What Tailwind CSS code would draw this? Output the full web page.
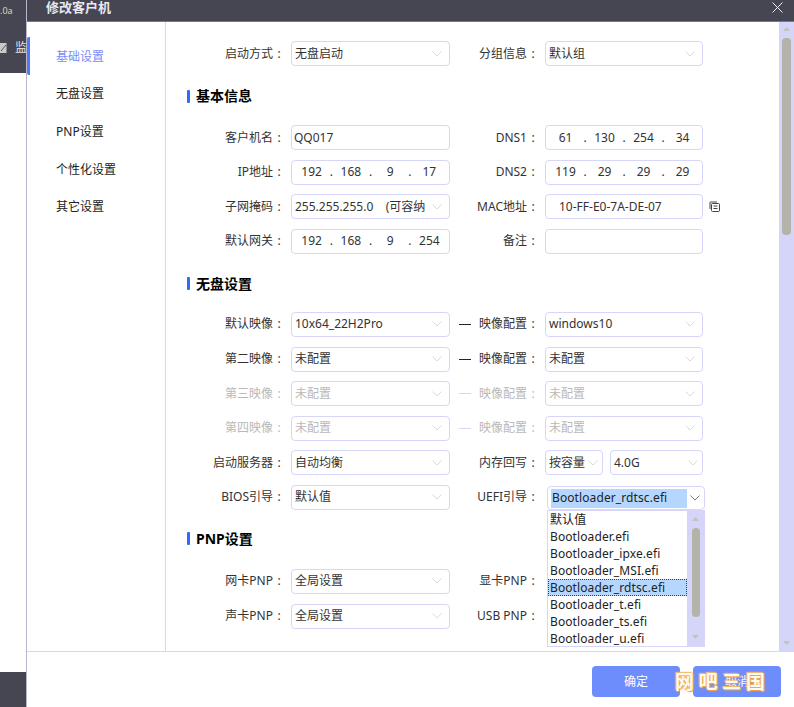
<!DOCTYPE html>
<html lang="zh">
<head>
<meta charset="utf-8">
<script src="https://cdn.jsdelivr.net/npm/@tailwindcss/browser@4"></script>
</head>
<body class="bg-white">
<div class="relative flex w-[794px] h-[707px] overflow-hidden bg-white text-[12px] leading-[16px] text-[#333] font-['Noto_Sans','Noto_Sans_CJK_SC',sans-serif]">

  <!-- page behind the dialog -->
  <div class="flex flex-col w-[27px] shrink-0 border-r border-[#b9b7c9] bg-white">
    <div class="h-[73px] bg-[#464653] overflow-hidden relative">
      <div class="absolute left-0 top-[3px] text-[9px] text-[#d9d9b8]">.0a</div>
      <svg class="absolute left-0 top-[42px]" width="7" height="13" viewBox="0 0 7 13"><path d="M0 1h6.500v10H0z" fill="#c9c9c9"/><path d="M1 9l5-6" stroke="#555" fill="none"/></svg>
      <div class="absolute left-[15px] top-[40px] text-[12px] text-[#e4e4e4] whitespace-nowrap w-[11px] overflow-hidden">监</div>
    </div>
    <div class="flex-1"></div>
    <div class="h-[35px] bg-[#464653]"></div>
  </div>

  <!-- dialog -->
  <div class="flex flex-col flex-1 min-w-0">
    <div class="flex items-center justify-between h-[22px] shrink-0 bg-[#464653] border-b border-[#77778a] pl-[19px] pr-[11px]">
      <div class="text-[13px] font-bold text-[#e8e8ee] -mt-[7px]">修改客户机</div>
      <svg class="-mt-[7px]" width="11" height="11" viewBox="0 0 11 11"><path d="M.5.5l10 10M10.5.5l-10 10" stroke="#f0f0f0" stroke-width="1" fill="none"/></svg>
    </div>

    <div class="flex h-[630px] shrink-0 border-b border-[#d6d6f5]">
      <!-- sidebar -->
      <div class="w-[139px] shrink-0 border-r border-[#d6d6f5] pt-[15px]">
        <div class="flex items-center h-[38px] pl-[26px] pt-[2px] border-l-[3px] border-[#4c78fb] rounded-l-[2px] text-[#7b8cf7]">基础设置</div>
        <div class="flex items-center h-[37px] pl-[29px] text-[#222]">无盘设置</div>
        <div class="flex items-center h-[38px] pl-[29px] pt-[2px] text-[#222]">PNP设置</div>
        <div class="flex items-center h-[37.5px] pl-[29px] pt-[2px] text-[#222]">个性化设置</div>
        <div class="flex items-center h-[37.5px] pl-[29px] pt-[2px] text-[#222]">其它设置</div>
      </div>

      <!-- form -->
      <div class="flex-1 min-w-0 pt-[19px] overflow-hidden">
        <div class="flex items-center h-[25px]">
          <div class="w-[119px] text-right">启动方式<span class="inline-block w-[12px] text-center">:</span></div>
          <div class="ml-[6px] w-[159px] h-[25px] flex items-center justify-between pl-[3px] pr-[7px] border border-[#d6d6fb] rounded-[4px]"><span>无盘启动</span><svg width="10" height="6" viewBox="0 0 10 6"><path d="M.5.5L5 5 9.500.5" stroke="#dcdccc" fill="none"/></svg></div>
          <div class="w-[89px] text-right">分组信息<span class="inline-block w-[12px] text-center">:</span></div>
          <div class="ml-[6px] w-[158px] h-[25px] flex items-center justify-between pl-[3px] pr-[7px] border border-[#d6d6fb] rounded-[4px]"><span>默认组</span><svg width="10" height="6" viewBox="0 0 10 6"><path d="M.5.5L5 5 9.500.5" stroke="#dcdccc" fill="none"/></svg></div>
        </div>

        <div class="flex items-center h-[14px] mt-[23px] mb-[22px] pl-[21px] gap-[6px] text-[14px] font-bold text-black">
          <span class="w-[3px] h-[13px] bg-[#2f6bf5] rounded-[1px]"></span><span>基本信息</span>
        </div>

        <div class="flex flex-col gap-[9.67px]">
          <div class="flex items-center h-[25px]">
            <div class="w-[119px] text-right">客户机名<span class="inline-block w-[12px] text-center">:</span></div>
            <div class="ml-[6px] w-[159px] h-[25px] flex items-center pl-[2px] border border-[#d6d6fb] rounded-[4px]">QQ017</div>
            <div class="w-[89px] text-right">DNS1<span class="inline-block w-[12px] text-center">:</span></div>
            <div class="ml-[6px] w-[158px] h-[25px] flex items-center border border-[#d6d6fb] rounded-[4px] text-center">
              <span class="flex-1">61</span><span class="w-0 flex justify-center">.</span><span class="flex-1">130</span><span class="w-0 flex justify-center">.</span><span class="flex-1">254</span><span class="w-0 flex justify-center">.</span><span class="flex-1">34</span>
            </div>
          </div>
          <div class="flex items-center h-[25px]">
            <div class="w-[119px] text-right">IP地址<span class="inline-block w-[12px] text-center">:</span></div>
            <div class="ml-[6px] w-[159px] h-[25px] flex items-center border border-[#d6d6fb] rounded-[4px] text-center">
              <span class="flex-1">192</span><span class="w-0 flex justify-center">.</span><span class="flex-1">168</span><span class="w-0 flex justify-center">.</span><span class="flex-1">9</span><span class="w-0 flex justify-center">.</span><span class="flex-1">17</span>
            </div>
            <div class="w-[89px] text-right">DNS2<span class="inline-block w-[12px] text-center">:</span></div>
            <div class="ml-[6px] w-[158px] h-[25px] flex items-center border border-[#d6d6fb] rounded-[4px] text-center">
              <span class="flex-1">119</span><span class="w-0 flex justify-center">.</span><span class="flex-1">29</span><span class="w-0 flex justify-center">.</span><span class="flex-1">29</span><span class="w-0 flex justify-center">.</span><span class="flex-1">29</span>
            </div>
          </div>
          <div class="flex items-center h-[25px]">
            <div class="w-[119px] text-right">子网掩码<span class="inline-block w-[12px] text-center">:</span></div>
            <div class="ml-[6px] w-[159px] h-[25px] flex items-center justify-between pl-[3px] pr-[7px] border border-[#d6d6fb] rounded-[4px]"><span class="whitespace-pre">255.255.255.0    (可容纳</span><svg class="shrink-0" width="10" height="6" viewBox="0 0 10 6"><path d="M.5.5L5 5 9.500.5" stroke="#dcdccc" fill="none"/></svg></div>
            <div class="w-[89px] text-right">MAC地址<span class="inline-block w-[12px] text-center">:</span></div>
            <div class="ml-[6px] w-[158px] h-[25px] flex items-center pl-[13px] border border-[#d6d6fb] rounded-[4px]">10-FF-E0-7A-DE-07</div>
            <svg class="ml-[6px]" width="11" height="11" viewBox="0 0 11 11"><rect x="2.500" y="2.500" width="8" height="8" rx="1" stroke="#444" fill="none"/><path d="M1 8V1.500Q1 1 1.500 1H8M4.500 5h4M4.500 7.500h4" stroke="#444" fill="none"/></svg>
          </div>
          <div class="flex items-center h-[25px]">
            <div class="w-[119px] text-right">默认网关<span class="inline-block w-[12px] text-center">:</span></div>
            <div class="ml-[6px] w-[159px] h-[25px] flex items-center border border-[#d6d6fb] rounded-[4px] text-center">
              <span class="flex-1">192</span><span class="w-0 flex justify-center">.</span><span class="flex-1">168</span><span class="w-0 flex justify-center">.</span><span class="flex-1">9</span><span class="w-0 flex justify-center">.</span><span class="flex-1">254</span>
            </div>
            <div class="w-[89px] text-right">备注<span class="inline-block w-[12px] text-center">:</span></div>
            <div class="ml-[6px] w-[158px] h-[25px] border border-[#d6d6fb] rounded-[4px]"></div>
          </div>
        </div>

        <div class="flex items-center h-[14px] mt-[23px] mb-[21px] pl-[21px] gap-[6px] text-[14px] font-bold text-black">
          <span class="w-[3px] h-[13px] bg-[#2f6bf5] rounded-[1px]"></span><span>无盘设置</span>
        </div>

        <div class="flex flex-col gap-[9.6px]">
          <div class="flex items-center h-[25px]">
            <div class="w-[119px] text-right">默认映像<span class="inline-block w-[12px] text-center">:</span></div>
            <div class="ml-[6px] w-[159px] h-[25px] flex items-center justify-between pl-[3px] pr-[7px] border border-[#d6d6fb] rounded-[4px]"><span>10x64_22H2Pro</span><svg width="10" height="6" viewBox="0 0 10 6"><path d="M.5.5L5 5 9.500.5" stroke="#dcdccc" fill="none"/></svg></div>
            <div class="w-[89px] flex items-center justify-between pl-[9px]"><span class="w-[12px] h-px bg-[#222]"></span><span>映像配置<span class="inline-block w-[12px] text-center">:</span></span></div>
            <div class="ml-[6px] w-[158px] h-[25px] flex items-center justify-between pl-[3px] pr-[7px] border border-[#d6d6fb] rounded-[4px]"><span>windows10</span><svg width="10" height="6" viewBox="0 0 10 6"><path d="M.5.5L5 5 9.500.5" stroke="#dcdccc" fill="none"/></svg></div>
          </div>
          <div class="flex items-center h-[25px]">
            <div class="w-[119px] text-right">第二映像<span class="inline-block w-[12px] text-center">:</span></div>
            <div class="ml-[6px] w-[159px] h-[25px] flex items-center justify-between pl-[3px] pr-[7px] border border-[#d6d6fb] rounded-[4px]"><span>未配置</span><svg width="10" height="6" viewBox="0 0 10 6"><path d="M.5.5L5 5 9.500.5" stroke="#dcdccc" fill="none"/></svg></div>
            <div class="w-[89px] flex items-center justify-between pl-[9px]"><span class="w-[12px] h-px bg-[#222]"></span><span>映像配置<span class="inline-block w-[12px] text-center">:</span></span></div>
            <div class="ml-[6px] w-[158px] h-[25px] flex items-center justify-between pl-[3px] pr-[7px] border border-[#d6d6fb] rounded-[4px]"><span>未配置</span><svg width="10" height="6" viewBox="0 0 10 6"><path d="M.5.5L5 5 9.500.5" stroke="#dcdccc" fill="none"/></svg></div>
          </div>
          <div class="flex items-center h-[25px] text-[#b9b9b9]">
            <div class="w-[119px] text-right">第三映像<span class="inline-block w-[12px] text-center">:</span></div>
            <div class="ml-[6px] w-[159px] h-[25px] flex items-center justify-between pl-[3px] pr-[7px] border border-[#d6d6fb] rounded-[4px]"><span>未配置</span><svg width="10" height="6" viewBox="0 0 10 6"><path d="M.5.5L5 5 9.500.5" stroke="#dcdccc" fill="none"/></svg></div>
            <div class="w-[89px] flex items-center justify-between pl-[9px]"><span class="w-[12px] h-px bg-[#d6d6fb]"></span><span>映像配置<span class="inline-block w-[12px] text-center">:</span></span></div>
            <div class="ml-[6px] w-[158px] h-[25px] flex items-center justify-between pl-[3px] pr-[7px] border border-[#d6d6fb] rounded-[4px]"><span>未配置</span><svg width="10" height="6" viewBox="0 0 10 6"><path d="M.5.5L5 5 9.500.5" stroke="#dcdccc" fill="none"/></svg></div>
          </div>
          <div class="flex items-center h-[25px] text-[#b9b9b9]">
            <div class="w-[119px] text-right">第四映像<span class="inline-block w-[12px] text-center">:</span></div>
            <div class="ml-[6px] w-[159px] h-[25px] flex items-center justify-between pl-[3px] pr-[7px] border border-[#d6d6fb] rounded-[4px]"><span>未配置</span><svg width="10" height="6" viewBox="0 0 10 6"><path d="M.5.5L5 5 9.500.5" stroke="#dcdccc" fill="none"/></svg></div>
            <div class="w-[89px] flex items-center justify-between pl-[9px]"><span class="w-[12px] h-px bg-[#d6d6fb]"></span><span>映像配置<span class="inline-block w-[12px] text-center">:</span></span></div>
            <div class="ml-[6px] w-[158px] h-[25px] flex items-center justify-between pl-[3px] pr-[7px] border border-[#d6d6fb] rounded-[4px]"><span>未配置</span><svg width="10" height="6" viewBox="0 0 10 6"><path d="M.5.5L5 5 9.500.5" stroke="#dcdccc" fill="none"/></svg></div>
          </div>
          <div class="flex items-center h-[25px]">
            <div class="w-[119px] text-right">启动服务器<span class="inline-block w-[12px] text-center">:</span></div>
            <div class="ml-[6px] w-[159px] h-[25px] flex items-center justify-between pl-[3px] pr-[7px] border border-[#d6d6fb] rounded-[4px]"><span>自动均衡</span><svg width="10" height="6" viewBox="0 0 10 6"><path d="M.5.5L5 5 9.500.5" stroke="#dcdccc" fill="none"/></svg></div>
            <div class="w-[89px] text-right">内存回写<span class="inline-block w-[12px] text-center">:</span></div>
            <div class="ml-[6px] w-[58px] h-[25px] flex items-center justify-between pl-[3px] pr-[4px] border border-[#d6d6fb] rounded-[4px]"><span>按容量</span><svg width="10" height="6" viewBox="0 0 10 6"><path d="M.5.5L5 5 9.500.5" stroke="#dcdccc" fill="none"/></svg></div>
            <div class="ml-[7px] w-[93px] h-[25px] flex items-center justify-between pl-[3px] pr-[4px] border border-[#d6d6fb] rounded-[4px]"><span>4.0G</span><svg width="10" height="6" viewBox="0 0 10 6"><path d="M.5.5L5 5 9.500.5" stroke="#dcdccc" fill="none"/></svg></div>
          </div>
          <div class="flex items-center h-[25px]">
            <div class="w-[119px] text-right">BIOS引导<span class="inline-block w-[12px] text-center">:</span></div>
            <div class="ml-[6px] w-[159px] h-[25px] flex items-center justify-between pl-[3px] pr-[7px] border border-[#d6d6fb] rounded-[4px]"><span>默认值</span><svg width="10" height="6" viewBox="0 0 10 6"><path d="M.5.5L5 5 9.500.5" stroke="#dcdccc" fill="none"/></svg></div>
            <div class="w-[89px] text-right">UEFI引导<span class="inline-block w-[12px] text-center">:</span></div>
          </div>
        </div>

        <div class="flex items-center h-[14px] mt-[22px] mb-[23px] pl-[21px] gap-[6px] text-[14px] font-bold text-black">
          <span class="w-[3px] h-[13px] bg-[#2f6bf5] rounded-[1px]"></span><span>PNP设置</span>
        </div>

        <div class="flex flex-col gap-[9.6px]">
          <div class="flex items-center h-[25px]">
            <div class="w-[119px] text-right">网卡PNP<span class="inline-block w-[12px] text-center">:</span></div>
            <div class="ml-[6px] w-[159px] h-[25px] flex items-center justify-between pl-[3px] pr-[7px] border border-[#d6d6fb] rounded-[4px]"><span>全局设置</span><svg width="10" height="6" viewBox="0 0 10 6"><path d="M.5.5L5 5 9.500.5" stroke="#dcdccc" fill="none"/></svg></div>
            <div class="w-[89px] text-right">显卡PNP<span class="inline-block w-[12px] text-center">:</span></div>
          </div>
          <div class="flex items-center h-[25px]">
            <div class="w-[119px] text-right">声卡PNP<span class="inline-block w-[12px] text-center">:</span></div>
            <div class="ml-[6px] w-[159px] h-[25px] flex items-center justify-between pl-[3px] pr-[7px] border border-[#d6d6fb] rounded-[4px]"><span>全局设置</span><svg width="10" height="6" viewBox="0 0 10 6"><path d="M.5.5L5 5 9.500.5" stroke="#dcdccc" fill="none"/></svg></div>
            <div class="w-[89px] text-right">USB PNP<span class="inline-block w-[12px] text-center">:</span></div>
          </div>
        </div>
      </div>

      <!-- main scrollbar -->
      <div class="flex flex-col items-center w-[15px] shrink-0 bg-[#d5d5fa] pt-[5px]">
        <svg width="7" height="4" viewBox="0 0 7 4"><path d="M3.500 0L7 4H0z" fill="#c3c3bb"/></svg>
        <div class="w-[9px] h-[197px] mt-[7px] rounded-[4px] bg-[#b3b3a9]"></div>
        <div class="flex-1"></div>
        <svg class="mb-[6px]" width="7" height="4" viewBox="0 0 7 4"><path d="M0 0h7L3.500 4z" fill="#c3c3bb"/></svg>
      </div>
    </div>

    <!-- footer -->
    <div class="flex flex-1 justify-end items-start gap-[13px] pt-[14px] pr-[13px]">
      <button class="w-[88px] h-[31px] rounded-[4px] bg-[#6c8dfb] text-white text-[12px]">确定</button>
      <button class="w-[88px] h-[31px] rounded-[4px] bg-[#6c8dfb] text-white text-[12px]">取消</button>
    </div>
  </div>

  <!-- open combobox -->
  <div class="absolute left-[547px] top-[486px] w-[158px] h-[24px] flex items-center justify-between pl-[3px] pr-[4px] border border-[#d6d6fb] rounded-[4px] bg-white text-[#222]">
    <span class="w-[136px] h-[19px] flex items-center pl-[1px] tracking-[0.1px] bg-[#b5d7ff]">Bootloader_rdtsc.efi</span>
    <svg width="10" height="6" viewBox="0 0 10 6"><path d="M.5.5L5 5 9.500.5" stroke="#7a7a7a" fill="none"/></svg>
  </div>
  <div class="absolute left-[547px] top-[510px] w-[158px] h-[137px] flex border border-[#d6d6fb] bg-white leading-[18px] tracking-[0.1px] text-[#222]">
    <div class="flex-1 min-w-0">
      <div class="h-[17px] pl-[2px]">默认值</div>
      <div class="h-[17px] pl-[2px]">Bootloader.efi</div>
      <div class="h-[17px] pl-[2px]">Bootloader_ipxe.efi</div>
      <div class="h-[17px] pl-[2px]">Bootloader_MSI.efi</div>
      <div class="h-[17px] pl-[1px] bg-[#b5d7ff] border border-dotted border-[#444] leading-[16px]">Bootloader_rdtsc.efi</div>
      <div class="h-[17px] pl-[2px]">Bootloader_t.efi</div>
      <div class="h-[17px] pl-[2px]">Bootloader_ts.efi</div>
      <div class="h-[17px] pl-[2px]">Bootloader_u.efi</div>
    </div>
    <div class="flex flex-col items-center w-[17px] shrink-0 bg-[#d5d5fa] pt-[6px]">
      <svg width="7" height="4" viewBox="0 0 7 4"><path d="M3.500 0L7 4H0z" fill="#c3c3bb"/></svg>
      <div class="w-[8px] h-[89px] mt-[7px] rounded-[4px] bg-[#b3b3a9]"></div>
      <div class="flex-1"></div>
      <svg class="mb-[7px]" width="7" height="4" viewBox="0 0 7 4"><path d="M0 0h7L3.500 4z" fill="#c3c3bb"/></svg>
    </div>
  </div>

  <!-- watermark -->
  <div class="absolute left-[675px] top-[670px] w-[90px] flex justify-between text-[19px] leading-[24px] font-bold text-[#fffaf0] [text-shadow:0_0_2px_#f3a94a,0_0_2px_#f3a94a,1px_1px_1px_#f0a040,-1px_-1px_1px_#f7c98a]">
    <span>网</span><span>吧</span><span>三</span><span>国</span>
  </div>
</div>
</body>
</html>
